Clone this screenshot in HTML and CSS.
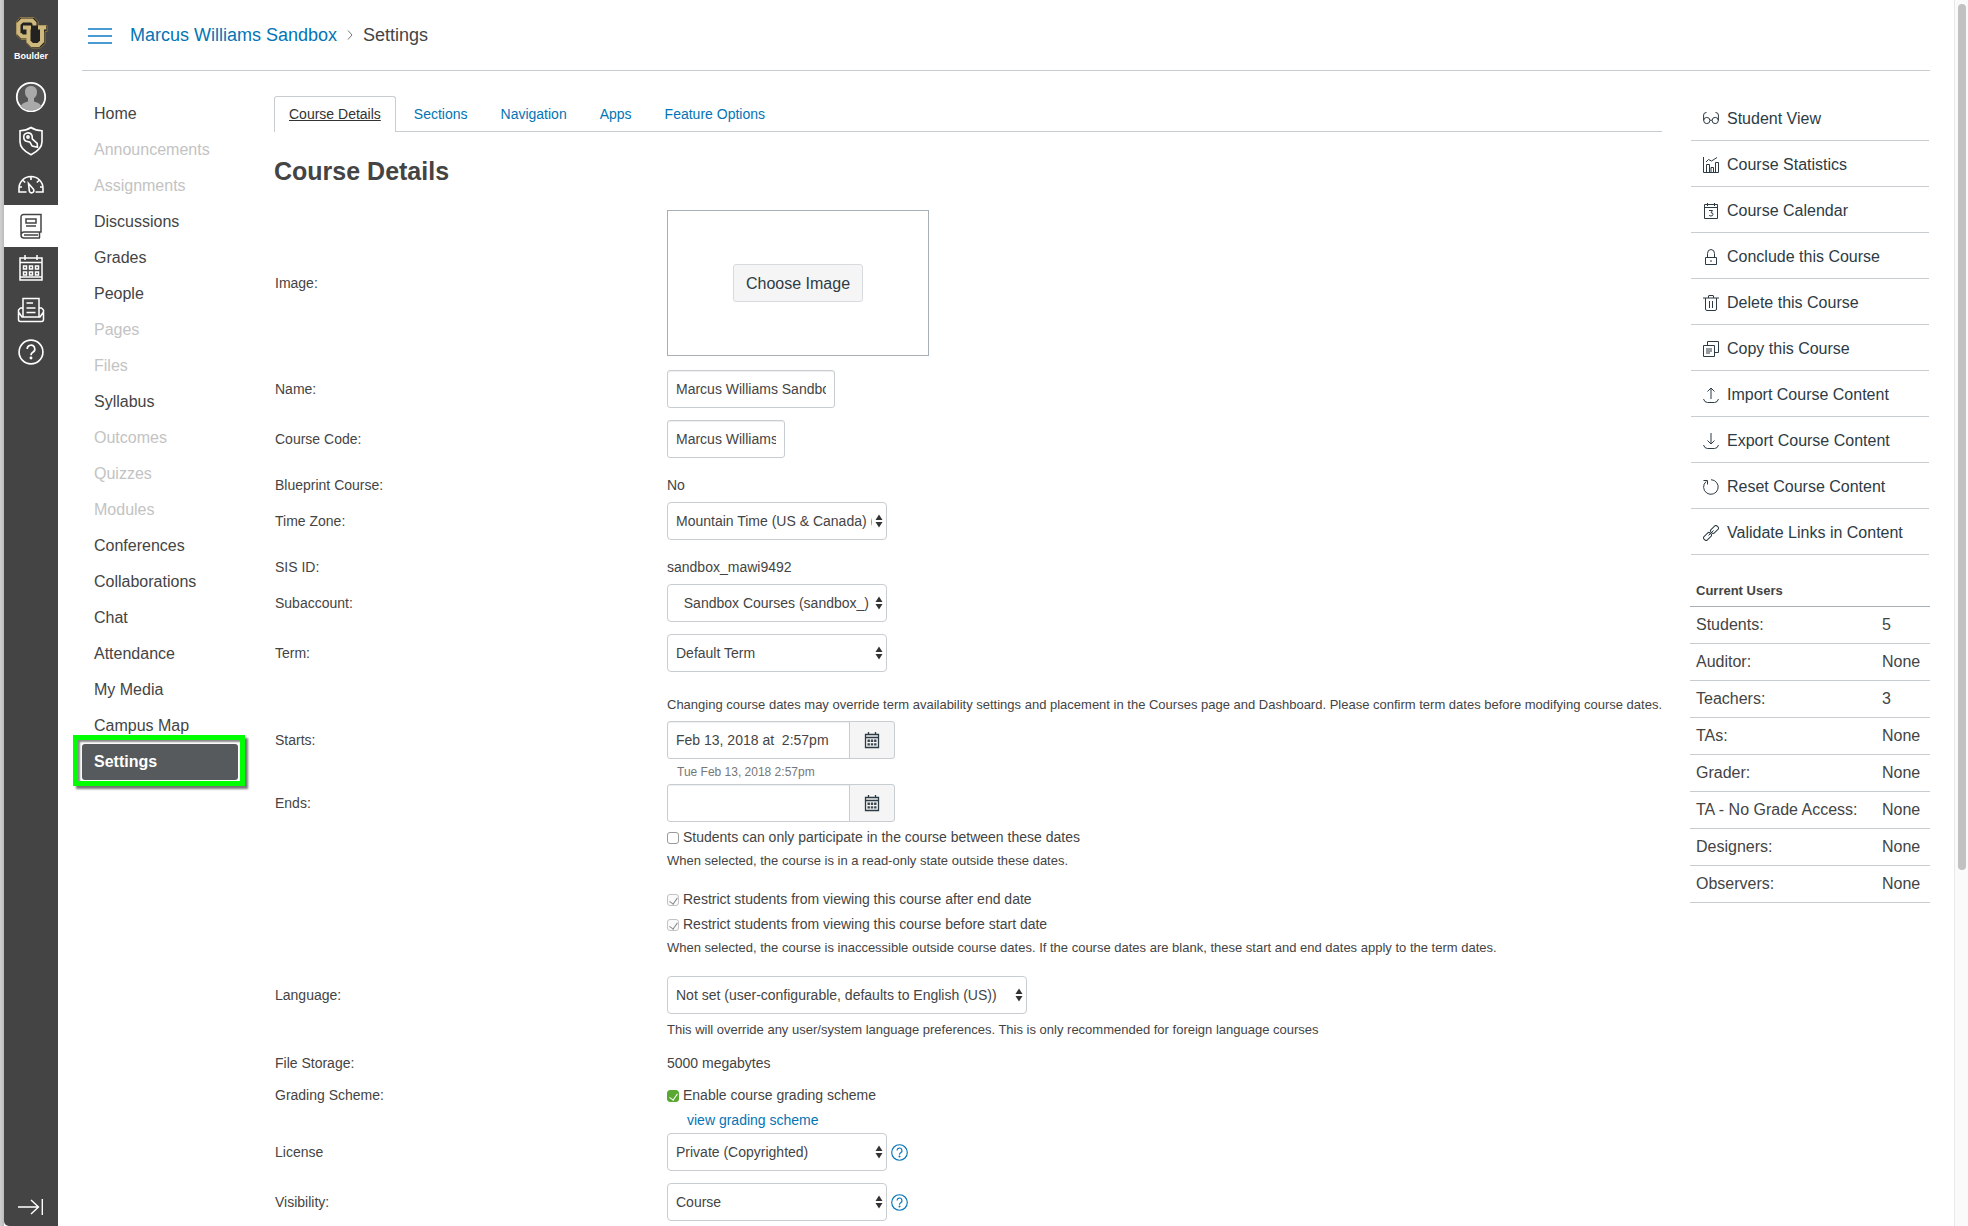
FILE: index.html
```html
<!DOCTYPE html>
<html lang="en">
<head>
<meta charset="utf-8">
<title>Course Details</title>
<link rel="stylesheet" href="styles.css">
</head>
<body>
<svg class="defs" width="0" height="0" aria-hidden="true">
  <defs>
    <symbol id="updown" viewBox="0 0 8 14"><path d="M4 0.500 7.500 6h-7zM4 13.500 7.500 8h-7z" fill="#333"/></symbol>
    <symbol id="minical" viewBox="0 0 16 18"><path d="M1.500 3.500h13v13h-13zM1.500 6.500h13M4.500 1v3M11.500 1v3" fill="none" stroke="#2d3b45" stroke-width="1.300"/><path d="M3.500 8.500h2.400v2.400h-2.400zM6.800 8.500h2.400v2.400h-2.400zM10.100 8.500h2.400v2.400h-2.400zM3.500 12.200h2.400v2.400h-2.400zM6.800 12.200h2.400v2.400h-2.400zM10.100 12.200h2.400v2.400h-2.400z" fill="#3c4953"/></symbol>
    <symbol id="question" viewBox="0 0 24 24"><circle cx="12" cy="12" r="11"/><path d="M8.500 9.300a3.500 3.500 0 1 1 5.200 3c-1.200.7-1.700 1.300-1.700 2.700"/><circle cx="12" cy="17.600" r=".6"/></symbol>
  </defs>
</svg>
<div class="app">
  <nav class="global" aria-label="Global navigation">
    <a class="logo" href="#">
      <svg width="34" height="34" viewBox="0 0 34 34" aria-hidden="true">
        <path d="M6 1.500h14l4 4v4h9v6h-2v12l-4.500 4.500h-9l-4.500-4.500v-4h-6l-4.500-4.500v-13z" fill="#222" stroke="#8a7546"/>
        <path d="M20.500 9.500V7L18 4.500H8L4.500 8v9L8 20.500h6M9 11.500h8M14.500 11.500v14l3.500 3.500h6.500l3.500-3.500v-14M24 11.500h8" fill="none" stroke="#cfb87c" stroke-width="4"/>
      </svg>
      <span>Boulder</span>
    </a>
    <a class="g tall" href="#" aria-label="Account"><svg width="32" height="32" viewBox="0 0 32 32"><circle cx="16" cy="16" r="14.200" fill="#555" stroke="#fff" stroke-width="1.800"/><path d="M5.500 25.500c2-4 6-4 7.500-5.200v-3c-2.500-2-3-4-3-6.500 0-3.600 2.500-5.800 6-5.800s6 2.200 6 5.800c0 2.500-.5 4.500-3 6.500v3c1.500 1.200 5.500 1.200 7.500 5.200-5.500 5.500-15.500 5.500-21 0z" fill="#a9a9a9"/></svg></a>
    <a class="g tall" href="#" aria-label="Admin"><svg width="26" height="30" viewBox="0 0 26 30" fill="none" stroke="#fff" stroke-width="1.600"><path d="M13 1.500c3.500 2.300 7 3.200 11 3.200v11c0 6-5 10-11 13-6-3-11-7-11-13v-11c4 0 7.500-.9 11-3.200z"/><path d="M14 9.500a4.300 4.300 0 1 0-4.300 6c1 .6 1.700.1 2.300.8l2.200 3.800 5.300 1.200-.3-4-4.700-4.100c-.7-1 .1-2.200-.5-3.700z"/><circle cx="10" cy="11" r="1.100"/></svg></a>
    <a class="g" href="#" aria-label="Dashboard"><svg width="28" height="20" viewBox="0 0 28 20" fill="none" stroke="#fff" stroke-width="1.600"><path d="M9.500 18H2v-3.500a12 12 0 0 1 24 0V18h-7.500M14 2.500v3.500M6 6.500l2.200 2M22 6.500l-2.200 2M2 13h3M26 13h-3"/><path d="M11.500 9.500l4.800 5.500a2.300 2.300 0 1 1-4 1.800z"/></svg></a>
    <a class="g on" href="#" aria-label="Courses"><svg width="22" height="26" viewBox="0 0 22 26" fill="none" stroke="#444" stroke-width="1.500"><path d="M20 25H4a3 3 0 0 1-3-3V4a2.500 2.500 0 0 1 2.500-2.500H21V19H4a3 3 0 0 0-3 3M19.500 19v6M4 22h14"/><path d="M6 6h10v4H6zM6 13h10"/></svg></a>
    <a class="g" href="#" aria-label="Calendar"><svg width="24" height="28" viewBox="0 0 24 28" fill="none" stroke="#fff" stroke-width="1.500"><path d="M1 4h22v22H1zM1 8.500h22M6 1v5M18 1v5M1 23h22" /><path d="M4.500 12h3v3h-3zM10.500 12h3v3h-3zM16.500 12h3v3h-3zM4.500 18h3v3h-3zM10.500 18h3v3h-3zM16.500 18h3v3h-3z"/></svg></a>
    <a class="g" href="#" aria-label="Inbox"><svg width="28" height="26" viewBox="0 0 28 26" fill="none" stroke="#fff" stroke-width="1.500"><path d="M6 20V1.500h16V20M9.500 6H16M9.500 11h9M9.500 15.500h9"/><path d="M6 11H3.500L1.500 13v9.500a2 2 0 0 0 2 2h21a2 2 0 0 0 2-2V13l-2-2H22M1.500 15l3.500 5h18l3.500-5"/></svg></a>
    <a class="g" href="#" aria-label="Help"><svg width="26" height="26" fill="none" stroke="#fff" stroke-width="1.500"><use href="#question"/></svg></a>
    <button class="collapse" type="button" aria-label="Expand navigation"><svg width="26" height="18" viewBox="0 0 26 18" fill="none" stroke="#fff" stroke-width="1.400"><path d="M0 9h20M13 2l7.500 7-7.500 7M24.300 1v16"/></svg></button>
  </nav>

  <div class="page">
    <header class="top">
      <button class="burger" type="button" aria-label="Course navigation"><svg width="24" height="16" viewBox="0 0 24 16"><path d="M0 1h24M0 8h24M0 15h24" stroke="#4a9bd4" stroke-width="2"/></svg></button>
      <nav class="crumbs" aria-label="Breadcrumbs"><a href="#">Marcus Williams Sandbox</a><svg width="6" height="10" viewBox="0 0 6 10" fill="none" stroke="#777"><path d="M1 .5l4 4.500-4 4.500"/></svg><span>Settings</span></nav>
    </header>

    <div class="body">
      <nav class="course" aria-label="Course navigation">
        <a href="#">Home</a>
        <a class="off" href="#">Announcements</a>
        <a class="off" href="#">Assignments</a>
        <a href="#">Discussions</a>
        <a href="#">Grades</a>
        <a href="#">People</a>
        <a class="off" href="#">Pages</a>
        <a class="off" href="#">Files</a>
        <a href="#">Syllabus</a>
        <a class="off" href="#">Outcomes</a>
        <a class="off" href="#">Quizzes</a>
        <a class="off" href="#">Modules</a>
        <a href="#">Conferences</a>
        <a href="#">Collaborations</a>
        <a href="#">Chat</a>
        <a href="#">Attendance</a>
        <a href="#">My Media</a>
        <a href="#">Campus Map</a>
        <a class="current" href="#">Settings</a>
      </nav>

      <main class="main">
        <nav class="tabs" aria-label="Settings sections">
          <a class="tab on" href="#">Course Details</a><a class="tab" href="#">Sections</a><a class="tab" href="#">Navigation</a><a class="tab" href="#">Apps</a><a class="tab" href="#">Feature Options</a>
        </nav>
        <h1>Course Details</h1>
        <form class="form">
          <div class="row image"><span class="label">Image:</span><div class="picture"><button class="choose" type="button">Choose Image</button></div></div>
          <div class="row"><label class="label" for="name">Name:</label><input class="text w-name" id="name" type="text" value="Marcus Williams Sandbox"></div>
          <div class="row"><label class="label" for="code">Course Code:</label><input class="text w-code" id="code" type="text" value="Marcus Williams Sandbox"></div>
          <div class="row plain"><span class="label">Blueprint Course:</span><span>No</span></div>
          <div class="row"><label class="label" for="tz">Time Zone:</label><span class="select"><select id="tz"><option>Mountain Time (US &amp; Canada) (-07:00/-06:00)</option></select><svg width="8" height="14"><use href="#updown"/></svg></span></div>
          <div class="row plain"><span class="label">SIS ID:</span><span>sandbox_mawi9492</span></div>
          <div class="row"><label class="label" for="sub">Subaccount:</label><span class="select"><select id="sub"><option>&nbsp;&nbsp;Sandbox Courses (sandbox_)</option></select><svg width="8" height="14"><use href="#updown"/></svg></span></div>
          <div class="row"><label class="label" for="term">Term:</label><span class="select"><select id="term"><option>Default Term</option></select><svg width="8" height="14"><use href="#updown"/></svg></span></div>
          <p class="note indent lead">Changing course dates may override term availability settings and placement in the Courses page and Dashboard. Please confirm term dates before modifying course dates.</p>
          <div class="row tight"><label class="label" for="start">Starts:</label>
            <div><div class="date"><input class="text" id="start" type="text" value="Feb 13, 2018 at  2:57pm"><button type="button" aria-label="Choose start date"><svg width="16" height="18"><use href="#minical"/></svg></button></div>
            <div class="hint">Tue Feb 13, 2018 2:57pm</div></div></div>
          <div class="row tight"><label class="label" for="end">Ends:</label>
            <div><div class="date"><input class="text" id="end" type="text"><button type="button" aria-label="Choose end date"><svg width="16" height="18"><use href="#minical"/></svg></button></div>
            <label class="check first"><input type="checkbox">Students can only participate in the course between these dates</label>
            <p class="note after">When selected, the course is in a read-only state outside these dates.</p>
            <label class="check gap"><input type="checkbox" checked disabled>Restrict students from viewing this course after end date</label>
            <label class="check"><input type="checkbox" checked disabled>Restrict students from viewing this course before start date</label>
            <p class="note last">When selected, the course is inaccessible outside course dates. If the course dates are blank, these start and end dates apply to the term dates.</p></div></div>
          <div class="row tight"><label class="label" for="lang">Language:</label>
            <div><span class="select wide"><select id="lang"><option>Not set (user-configurable, defaults to English (US))</option></select><svg width="8" height="14"><use href="#updown"/></svg></span>
            <p class="note under">This will override any user/system language preferences. This is only recommended for foreign language courses</p></div></div>
          <div class="row plain"><span class="label">File Storage:</span><span>5000 megabytes</span></div>
          <div class="row scheme"><span class="label">Grading Scheme:</span><div><label class="check"><input type="checkbox" checked>Enable course grading scheme</label><a class="view" href="#">view grading scheme</a></div></div>
          <div class="row"><label class="label" for="license">License</label><span class="select"><select id="license"><option>Private (Copyrighted)</option></select><svg width="8" height="14"><use href="#updown"/></svg></span><a class="help" href="#" aria-label="License help"><svg width="17" height="17"><use href="#question"/></svg></a></div>
          <div class="row end"><label class="label" for="vis">Visibility:</label><span class="select"><select id="vis"><option>Course</option></select><svg width="8" height="14"><use href="#updown"/></svg></span><a class="help" href="#" aria-label="Visibility help"><svg width="17" height="17"><use href="#question"/></svg></a></div>
        </form>
      </main>

      <aside class="side">
        <div class="actions">
          <a href="#"><svg viewBox="0 0 16 16"><circle cx="3.800" cy="9.500" r="3.100"/><circle cx="12.200" cy="9.500" r="3.100"/><path d="M.6 9.500V4q0-2.500 2.900-2.500M15.400 9.500V4q0-2.500-2.900-2.500M6.900 9.500q1.100-1 2.200 0"/></svg>Student View</a>
          <a href="#"><svg viewBox="0 0 16 16"><path d="M.5 0v15.500h15V5.500h-3v10M3.500 15.500v-8h3v8M8 15.500V10.500h2.500v5M3 5L5.500 2.500l3 1.500 5.500-3.500"/></svg>Course Statistics</a>
          <a href="#"><svg viewBox="0 0 16 16"><path d="M1.500 1.500h13v14h-13zM1.500 4.500h13M4.500 0v3M11.500 0v3M6 7.500h3.500L8 9.700q2 0 2 1.600t-2 1.700q-1.500 0-2-1"/></svg>Course Calendar</a>
          <a href="#"><svg viewBox="0 0 16 16"><path d="M2.500 8.500h11v7h-11zM4.500 8.500V4.500a3.500 4 0 0 1 7 0v4M8 11v2"/></svg>Conclude this Course</a>
          <a href="#"><svg viewBox="0 0 16 16"><path d="M0 3h16M2.500 3v11q0 1.500 1.500 1.500h8q1.500 0 1.500-1.500V3M5.500 3V1q0-.5.500-.5h4q.5 0 .5.500v2M6.500 6v7M9.500 6v7"/></svg>Delete this Course</a>
          <a href="#"><svg viewBox="0 0 16 16"><path d="M.5 4.500h11v11h-11zM4.500 4.500v-4h11v11h-4M3 8h6M3 10h6M3 12h4"/></svg>Copy this Course</a>
          <a href="#"><svg viewBox="0 0 16 16"><path d="M8 12V1M4.500 4.500L8 1l3.500 3.500M.5 12q1 3.500 4 3.500h7q3 0 4-3.500"/></svg>Import Course Content</a>
          <a href="#"><svg viewBox="0 0 16 16"><path d="M8 0v11M4.500 7.500L8 11l3.500-3.500M.5 12q1 3.500 4 3.500h7q3 0 4-3.500"/></svg>Export Course Content</a>
          <a href="#"><svg viewBox="0 0 16 16"><path d="M8 .7a7.300 7.300 0 1 1-4.800 1.700M.5 1.500h4v4"/></svg>Reset Course Content</a>
          <a href="#"><svg viewBox="0 0 16 16"><rect x="-4.300" y="-2.400" width="8.600" height="4.800" rx="1.800" transform="translate(4.500 11.500) rotate(-45)"/><rect x="-4.300" y="-2.400" width="8.600" height="4.800" rx="1.800" transform="translate(11.500 4.500) rotate(-45)"/><path d="M5.500 10.500l5-5"/></svg>Validate Links in Content</a>
        </div>
        <table class="users">
          <thead><tr><th colspan="2">Current Users</th></tr></thead>
          <tbody>
            <tr><td>Students:</td><td>5</td></tr>
            <tr><td>Auditor:</td><td>None</td></tr>
            <tr><td>Teachers:</td><td>3</td></tr>
            <tr><td>TAs:</td><td>None</td></tr>
            <tr><td>Grader:</td><td>None</td></tr>
            <tr><td>TA - No Grade Access:</td><td>None</td></tr>
            <tr><td>Designers:</td><td>None</td></tr>
            <tr><td>Observers:</td><td>None</td></tr>
          </tbody>
        </table>
      </aside>
    </div>
  </div>
  <div class="scroll" aria-hidden="true"><div class="thumb"></div></div>
</div>
</body>
</html>
```

FILE: styles.css
```css
* { box-sizing: border-box; }

body {
  margin: 0;
  background: #fff;
  color: #444;
  font: 14px/20px "Liberation Sans", Arial, sans-serif;
}

a { color: #0374b5; text-decoration: none; }
p, h1 { margin: 0; }
svg { display: block; flex: none; }
button { font: inherit; cursor: pointer; }
.defs { position: absolute; }

.app {
  display: flex;
  min-height: 100vh;
  background: linear-gradient(90deg, #d0d0d0, #bbb) left / 4px 100% no-repeat;
  padding-left: 4px;
}

/* global navigation */
.global {
  display: flex;
  flex-direction: column;
  flex: none;
  width: 54px;
  background: #444;
  border-bottom-left-radius: 5px;
}
.logo {
  display: flex;
  flex-direction: column;
  align-items: center;
  height: 75px;
  padding-top: 16px;
  color: #fff;
  font-size: 9px;
  font-weight: bold;
  line-height: 12px;
}
.g { display: flex; align-items: center; justify-content: center; height: 42px; }
.g.tall { height: 44px; }
.g.on { background: #fff; }
.collapse {
  display: flex;
  justify-content: center;
  margin-top: auto;
  padding: 10px 0;
  border: 0;
  background: none;
}

/* page header */
.page { flex: 1; min-width: 0; padding: 0 24px; }
.top {
  display: flex;
  align-items: center;
  gap: 18px;
  height: 71px;
  padding-left: 6px;
  border-bottom: 1px solid #c7cdd1;
}
.burger { padding: 1px 0 0; border: 0; background: none; }
.crumbs { display: flex; align-items: center; gap: 10px; font-size: 18px; line-height: 24px; }

.body { display: flex; }

/* course navigation */
.course { flex: none; width: 156px; padding-top: 25px; }
.course a {
  display: block;
  padding: 0 12px;
  color: #444;
  font-size: 16px;
  line-height: 36px;
}
.course .off { color: #c3c3c3; }
.course .current {
  position: relative;
  border-radius: 3px;
  background: #565a5c;
  color: #fff;
  font-weight: bold;
}
.course .current::after {
  content: "";
  position: absolute;
  inset: -9px -7px -6px -9px;
  border: 5px solid #0f0;
  box-shadow: 3px 3px 2px #777, inset 2px 2px 2px #888;
}

/* main column */
.main { flex: 1; min-width: 0; margin: 25px 28px 0 36px; }
.tabs { display: flex; height: 36px; border-bottom: 1px solid #c7cdd1; }
.tab { height: 35px; margin-right: 3px; padding: 0 14px; border: 1px solid transparent; border-bottom: 0; line-height: 34px; }
.tab.on {
  height: 36px;
  border-color: #c7cdd1;
  border-radius: 3px 3px 0 0;
  background: #fff;
  color: #333;
  text-decoration: underline;
}
h1 { padding: 24px 0; font-size: 25px; line-height: 30px; }

.row { display: flex; margin-bottom: 12px; line-height: 38px; }
.label { flex: none; width: 393px; padding-left: 1px; }
.image { align-items: center; margin-bottom: 14px; }
.plain { margin-bottom: 2px; line-height: 30px; }
.tight, .end { margin-bottom: 0; }
.end { padding-bottom: 4px; }
.picture {
  display: flex;
  align-items: center;
  justify-content: center;
  width: 262px;
  height: 146px;
  border: 1px solid #a5afb5;
}
.choose {
  height: 38px;
  padding: 0 12px;
  border: 1px solid #d8dbdd;
  border-radius: 3px;
  background: #f5f5f5;
  color: #2d3b45;
  font-size: 16px;
}
.text, select {
  height: 38px;
  border: 1px solid #c7cdd1;
  border-radius: 3px;
  background: #fff;
  color: #444;
  font: 14px/20px "Liberation Sans", Arial, sans-serif;
}
.text { padding: 0 8px; box-shadow: inset 0 1px 1px #eee; }
.w-name { width: 168px; }
.w-code { width: 118px; }
.select { position: relative; display: block; width: 220px; height: 38px; }
.select.wide { width: 360px; }
select { display: block; width: 100%; padding: 0 14px 0 8px; border-radius: 4px; appearance: none; }
.select svg { position: absolute; top: 12px; right: 4px; pointer-events: none; }

.note { font-size: 13px; line-height: 20px; white-space: nowrap; }
.indent { margin-left: 393px; }
.lead { padding: 11px 0 6px; }
.date { display: flex; width: 228px; }
.date .text { flex: 1; min-width: 0; border-radius: 3px 0 0 3px; white-space: pre; }
.date button {
  display: flex;
  align-items: center;
  justify-content: center;
  width: 46px;
  margin-left: -1px;
  padding: 0;
  border: 1px solid #c7cdd1;
  border-radius: 0 3px 3px 0;
  background: #f5f5f5;
}
.hint { padding: 2px 10px 0; color: #777; font-size: 12px; line-height: 23px; }

.check { display: flex; align-items: center; gap: 4px; line-height: 25px; }
.check.first { margin-top: 3px; }
.check.gap { margin-top: 16px; }
.check input {
  display: grid;
  place-items: center;
  width: 12px;
  height: 12px;
  margin: 0;
  border: 1px solid #999;
  border-radius: 3px;
  background: #fff;
  appearance: none;
}
.check input:checked { border-color: #5aa832; background: #5aa832; color: #fff; }
.check input:disabled { border-color: #c3c3c3; background: #fafafa; color: #888; }
.check input:checked::before {
  content: "";
  width: 4px;
  height: 7px;
  border: solid currentColor;
  border-width: 0 1px 1px 0;
  transform: rotate(35deg);
}
.after { padding-top: 1px; }
.last { padding: 1px 0 18px; }
.under { padding: 6px 0 8px; }
.scheme { margin: 5px 0 0; line-height: 25px; }
.view { display: block; padding-left: 20px; }
.help { display: flex; align-items: center; margin-left: 4px; }
.help svg { fill: none; stroke: #0374b5; stroke-width: 1.600; }

/* right column */
.side { flex: none; width: 240px; padding-top: 24px; }
.actions { padding: 0 1px; }
.actions a {
  display: flex;
  align-items: center;
  gap: 8px;
  height: 46px;
  padding: 2px 0 0 12px;
  border-bottom: 1px solid #c7cdd1;
  color: #2d3b45;
  font-size: 16px;
}
.actions svg { width: 16px; height: 16px; fill: none; stroke: #2d3b45; }
.users { width: 100%; margin-top: 20px; border-collapse: collapse; font-size: 16px; }
.users th {
  height: 31px;
  padding: 1px 6px 0;
  border-bottom: 1px solid #a5afb5;
  font-size: 13px;
  text-align: left;
}
.users td { height: 37px; padding: 1px 6px 0; border-bottom: 1px solid #c7cdd1; }
.users td:last-child { width: 54px; }

/* scroll track */
.scroll { flex: none; width: 14px; padding: 4px 2px 0 3px; border-left: 1px solid #e8e8e8; background: #fafafa; }
.thumb { width: 8px; height: calc(71vh - 4px); border-radius: 4px; background: #c1c1c1; }
```
